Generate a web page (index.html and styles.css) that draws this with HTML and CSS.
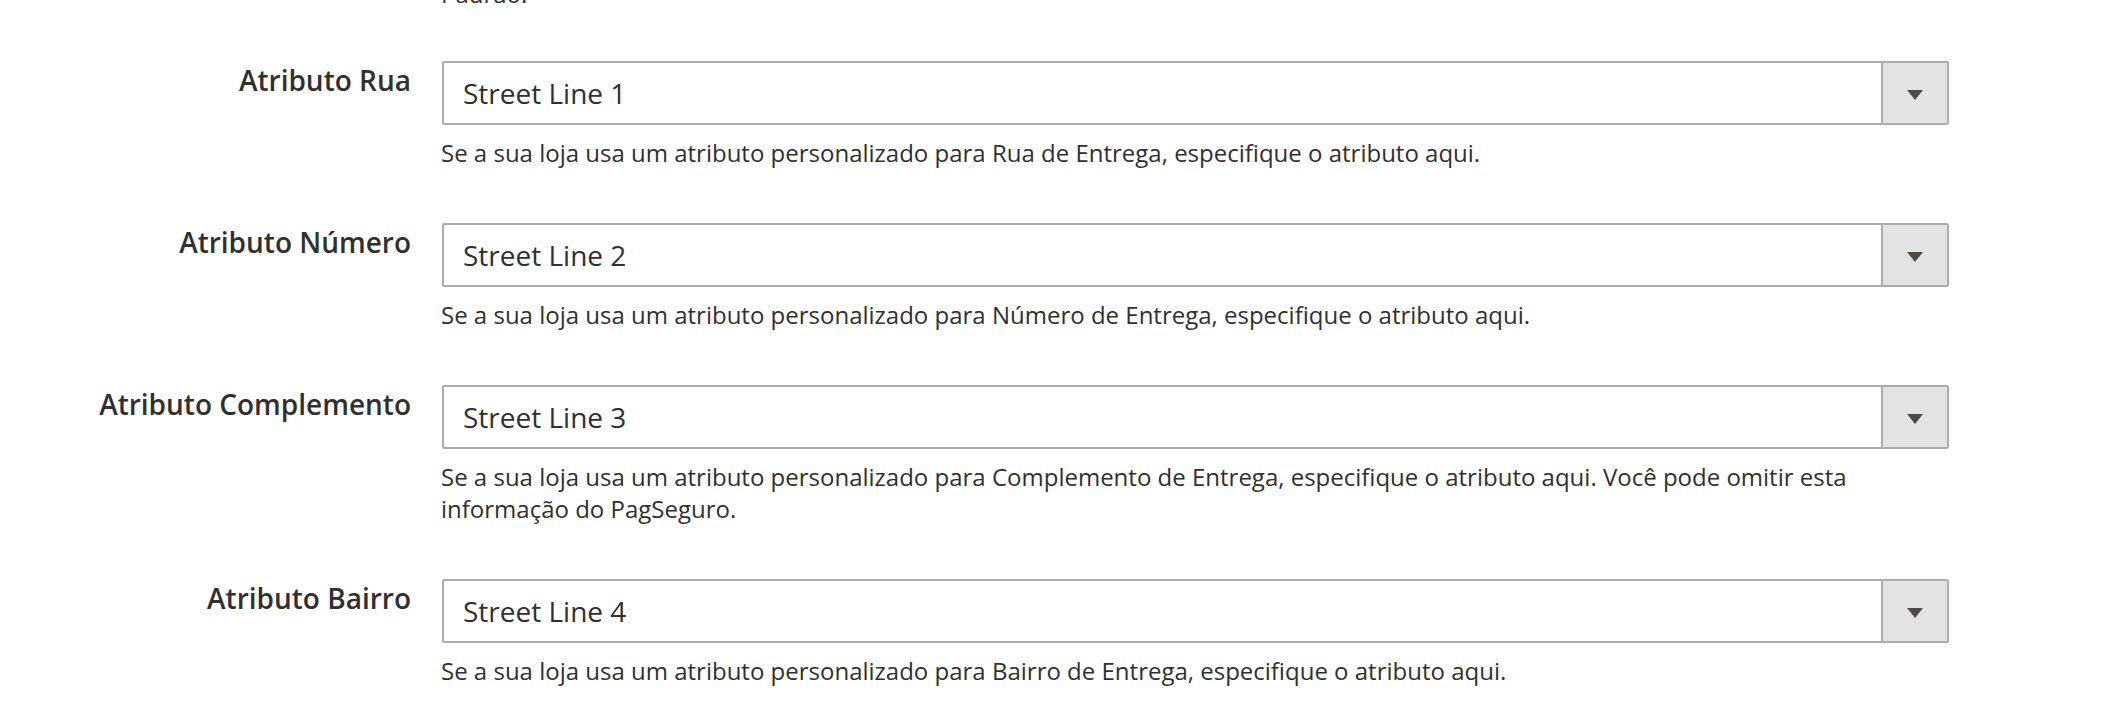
FILE: index.html
```html
<!DOCTYPE html>
<html>

	<head>
		<meta charset="UTF-8">
		<title>PagSeguro - Endereço</title>
		<link rel="stylesheet" href="styles.css">
	</head>

	<body>
		<div class="fieldset">
			<div class="field field-tail">
				<div class="label"></div>
				<div class="control">
					<p class="note">Padrão.</p>
				</div>
			</div>
			<div class="field">
				<label class="label">Atributo Rua</label>
				<div class="control">
					<div class="select">
						<span class="value">Street Line 1</span>
						<span class="button"><svg width="16" height="10" viewBox="0 0 16 10"><path d="M0 0H16L8 10Z" /></svg></span>
					</div>
					<p class="note">Se a sua loja usa um atributo personalizado para Rua de Entrega, especifique o atributo aqui.</p>
				</div>
			</div>
			<div class="field">
				<label class="label">Atributo Número</label>
				<div class="control">
					<div class="select">
						<span class="value">Street Line 2</span>
						<span class="button"><svg width="16" height="10" viewBox="0 0 16 10"><path d="M0 0H16L8 10Z" /></svg></span>
					</div>
					<p class="note">Se a sua loja usa um atributo personalizado para Número de Entrega, especifique o atributo aqui.</p>
				</div>
			</div>
			<div class="field">
				<label class="label">Atributo Complemento</label>
				<div class="control">
					<div class="select">
						<span class="value">Street Line 3</span>
						<span class="button"><svg width="16" height="10" viewBox="0 0 16 10"><path d="M0 0H16L8 10Z" /></svg></span>
					</div>
					<p class="note">Se a sua loja usa um atributo personalizado para Complemento de Entrega, especifique o atributo aqui. Você pode omitir esta informação do PagSeguro.</p>
				</div>
			</div>
			<div class="field">
				<label class="label">Atributo Bairro</label>
				<div class="control">
					<div class="select">
						<span class="value">Street Line 4</span>
						<span class="button"><svg width="16" height="10" viewBox="0 0 16 10"><path d="M0 0H16L8 10Z" /></svg></span>
					</div>
					<p class="note">Se a sua loja usa um atributo personalizado para Bairro de Entrega, especifique o atributo aqui.</p>
				</div>
			</div>
		</div>
	</body>

</html>
```

FILE: styles.css
```css
* {
	margin: 0;
	padding: 0;
	box-sizing: border-box;
}

body {
	background-color: #fff;
	color: #303030;
	font-family: "Open Sans", "Liberation Sans", sans-serif;
	overflow: hidden;
}

.fieldset {
	display: flex;
	flex-direction: column;
	gap: 54px;
	margin-top: -25px;
}

.field {
	display: grid;
	grid-template-columns: 411px 1507px;
	column-gap: 31px;
	align-items: start;
}

.label {
	text-align: right;
	font-size: 28px;
	font-weight: 600;
	line-height: 38px;
}

.select {
	display: flex;
	height: 64px;
	border: 2px solid #adadad;
	border-radius: 2px;
	background-color: #fff;
}

.value {
	flex: 1;
	padding-left: 19px;
	font-size: 28px;
	line-height: 60px;
}

.button {
	width: 66px;
	display: flex;
	align-items: center;
	justify-content: center;
	background-color: #e3e3e3;
	border-left: 2px solid #adadad;
}

.button svg {
	fill: #514943;
	margin-top: 4px;
}

.note {
	margin-top: 12px;
	margin-left: -1px;
	font-size: 24px;
	line-height: 32px;
}

/* end of the field above, only its last pixels show */
.field-tail .note {
	margin-top: 3px;
	margin-bottom: -3px;
}
```
